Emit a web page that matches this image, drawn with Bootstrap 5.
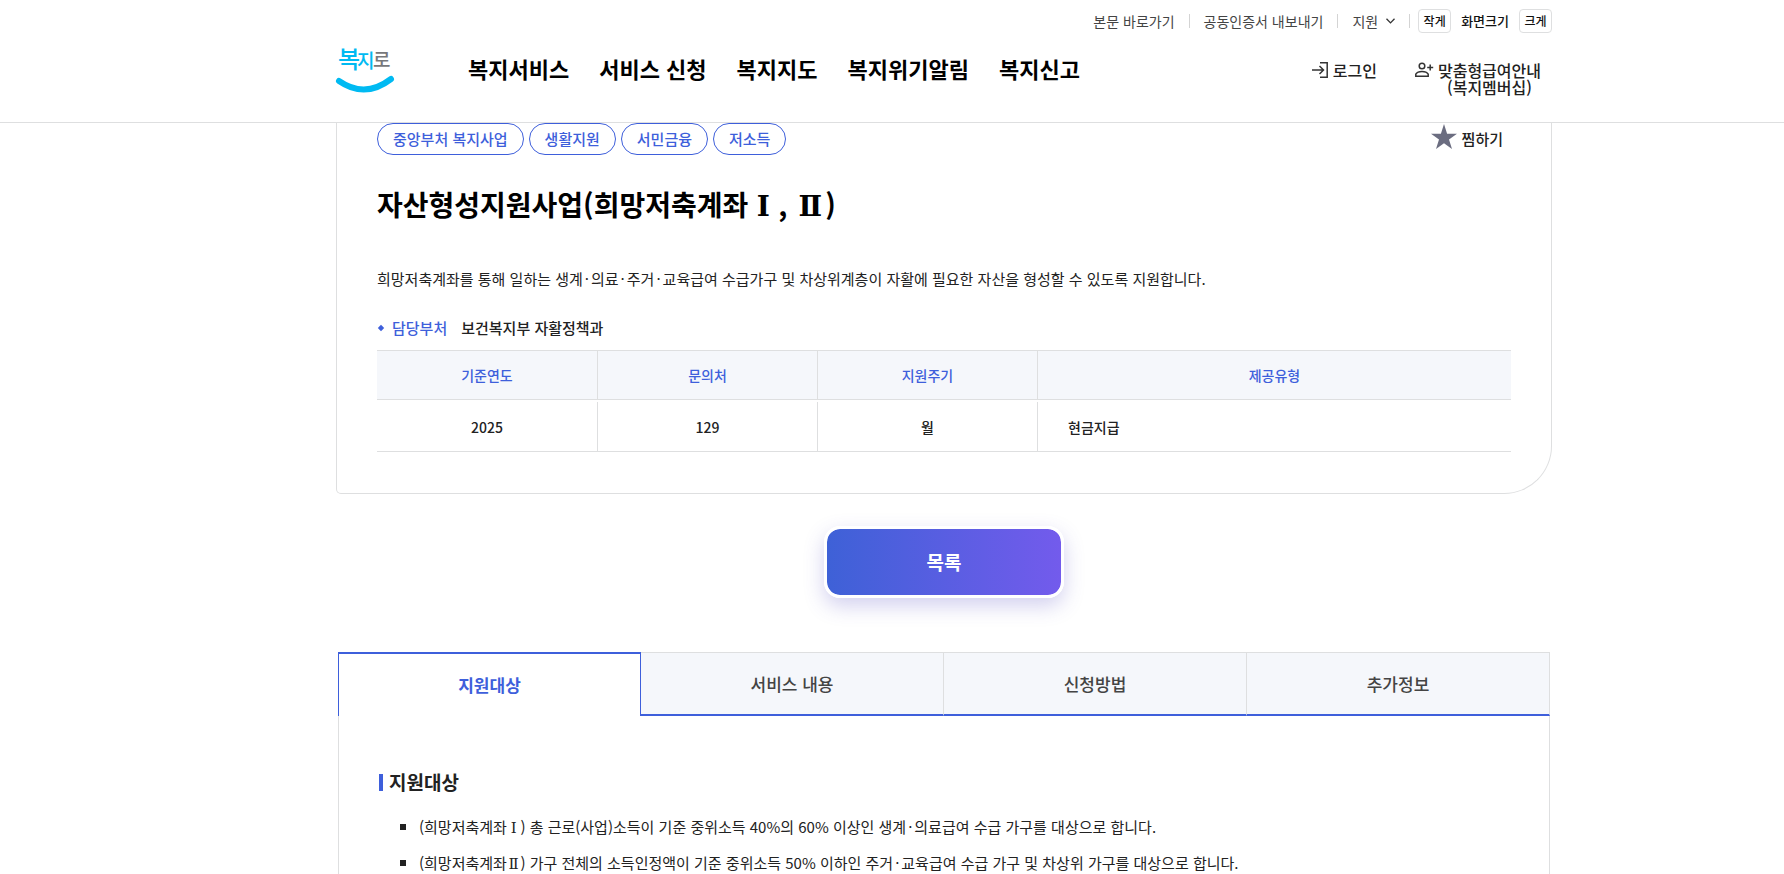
<!DOCTYPE html>
<html lang="ko">
<head>
<meta charset="utf-8">
<meta name="viewport" content="width=device-width, initial-scale=1">
<title>복지로 | 자산형성지원사업</title>
<link href="https://cdn.jsdelivr.net/npm/bootstrap@5.3.0/dist/css/bootstrap.min.css" rel="stylesheet">
<style>
:root{--brand:#3e5fdb;--line:#dedfe0;--soft:#f5f7fb}
body{font-family:"Noto Sans CJK KR","Noto Sans",sans-serif;font-weight:400;color:#222;background:#fff;overflow-x:hidden}
a{color:inherit;text-decoration:none}
.page-side{padding-left:104px}
.page-width{max-width:1216px;margin:0 auto}
.site-header{border-bottom:1px solid var(--line);z-index:10;padding-bottom:19px}
.util-row{height:33px;padding-top:9px;font-size:14px;line-height:24px;color:#444}
.util-sep{width:1px;height:14px;background:#d4d4d4;margin:0 14px}
.size-btn{width:33px;height:24px;border:1px solid var(--line);border-radius:4px;background:#fff;font-size:12px;line-height:20px;font-weight:500;color:#111}
.size-label{font-size:13px;font-weight:500;color:#111;margin:0 10px}
.main-row{height:70px}
.main-nav{margin-left:74px;gap:30px;font-size:22px;line-height:32px;font-weight:700;color:#000}
.user-links{font-size:16px;line-height:17px;font-weight:500;color:#222;gap:38px;padding-right:11px;padding-top:13px}
.util-toggle{font-size:14px;line-height:24px;color:#444}
.logo-art{overflow:visible}
.intro-box{border:1px solid var(--line);border-top:0;border-radius:0 0 48px 5px;padding:0 40px 39px}
.tag-row{gap:5px}
.tag-pill{height:32px;line-height:30px;padding:0 15px;border:1px solid var(--brand);border-radius:16px;color:var(--brand);font-size:15px;font-weight:500}
.wish-btn{font-size:15px;line-height:32px;font-weight:500;color:#222;padding-right:8px}
.svc-title{font-size:28px;line-height:40px;font-weight:700;color:#000;margin:29px 0 0}
.svc-desc{font-size:15px;line-height:24px;margin:43px 0 0}
.numeral{display:inline-block;width:.9em;line-height:1;text-align:center;font-family:"DejaVu Serif",serif}
.svc-title .numeral{width:30px}
.mid-dot{padding:0 2px}
.dept{font-size:15px;line-height:24px;font-weight:500;margin:25px 0 0}
.dept-name{color:var(--brand);margin:0 14px 0 7px}
.info-table{width:100%;margin:8px 0 0;border-collapse:separate;border-spacing:0 2px;table-layout:fixed;font-size:14px;line-height:20px;font-weight:500;text-align:center}
.info-table th{height:50px;background:var(--soft);color:var(--brand);font-weight:500;border:solid var(--line);border-width:1px 0}
.info-table td{height:50px;border-bottom:1px solid var(--line)}
.info-table th+th,.info-table td+td{border-left:1px solid var(--line)}
.info-table td:last-child{text-align:left;padding-left:30px}
.col-narrow{width:220px}
.list-btn{width:240px;height:72px;border:3px solid #fff;border-radius:16px;background:linear-gradient(90deg,#3e61d7,#735bec) padding-box;box-shadow:0 8px 20px rgba(80,70,190,.25);color:#fff;font-size:19px;line-height:28px;font-weight:700;margin:32px 0 54px}
.detail{margin:0 2px}
.tab-bar{height:64px}
.tab-item{border:0;border-top:1px solid var(--line);border-right:1px solid var(--line);border-bottom:2px solid var(--brand);background:var(--soft);color:#444;font-size:17px;line-height:26px;font-weight:500;padding:0}
.tab-item.active{background:#fff;color:var(--brand);border:1px solid var(--brand);border-top-width:2px;border-bottom:0;font-weight:700}
.tab-body{border:solid var(--line);border-width:0 1px;padding:52px 40px 80px}
.sub-title{font-size:19px;line-height:28px;font-weight:700;margin:0 0 13px;gap:6px}
.sub-title::before{content:"";width:4px;height:17px;background:var(--brand)}
.target-list{margin:0;padding-left:21px;list-style:none;font-size:15px;line-height:36px}
.target-list li{display:flex;align-items:center;gap:13px}
.target-list li::before{content:"";flex:none;width:6px;height:6px;background:#222}
</style>
</head>
<body>
<header class="site-header sticky-top bg-white page-side">
  <div class="page-width">
    <div class="util-row d-flex justify-content-end align-items-center">
      <a href="#main">본문 바로가기</a>
      <span class="util-sep" aria-hidden="true"></span>
      <a href="#">공동인증서 내보내기</a>
      <span class="util-sep" aria-hidden="true"></span>
      <button type="button" class="util-toggle border-0 bg-transparent p-0 d-flex align-items-center gap-2">지원
        <svg width="9" height="6" viewBox="0 0 9 6" fill="none" stroke="#333" stroke-width="1.3"><path d="M.5.7 4.5 4.9 8.5.7"/></svg>
      </button>
      <span class="util-sep me-2" aria-hidden="true"></span>
      <button type="button" class="size-btn p-0">작게</button>
      <span class="size-label">화면크기</span>
      <button type="button" class="size-btn p-0">크게</button>
    </div>
    <div class="main-row d-flex align-items-center">
      <a href="#" aria-label="복지로 홈">
        <svg width="58" height="50" viewBox="0 0 58 50" class="logo-art d-block" font-family="Noto Sans CJK KR, sans-serif" font-weight="500">
          <text x="2" y="25" font-size="24" fill="#00baf2">복</text>
          <text x="21" y="25" font-size="19" fill="#00baf2">지</text>
          <text x="37" y="24" font-size="19" fill="#77787b">로</text>
          <path d="M3 38Q29 56 55 36" fill="none" stroke="#00baf2" stroke-width="6" stroke-linecap="round"/>
        </svg>
      </a>
      <nav class="main-nav d-flex" aria-label="주 메뉴">
        <a href="#">복지서비스</a><a href="#">서비스 신청</a><a href="#">복지지도</a><a href="#">복지위기알림</a><a href="#">복지신고</a>
      </nav>
      <div class="user-links d-flex align-items-start ms-auto">
        <a href="#" class="d-flex gap-1 mt-2">
          <svg width="17" height="16" viewBox="0 0 17 16" fill="none" stroke="#333" stroke-width="1.5"><path d="M8 .8h7.200v14.400H8M0 8h11M7.500 4 11.500 8l-4 4"/></svg>
          로그인</a>
        <a href="#" class="d-flex mt-2">
          <svg class="me-1" width="19" height="16" viewBox="0 0 19 16" fill="none" stroke="#333" stroke-width="1.5"><circle cx="7" cy="4" r="2.8"/><path d="M.8 14.200v-2C2.200 10 4.500 9.600 7 9.600s4.800.4 6.200 2.600v2zM15.200 2.500v6M12.200 5.500h6"/></svg>
          <span class="text-center">맞춤형급여안내<br>(복지멤버십)</span></a>
      </div>
    </div>
  </div>
</header>
<main id="main" class="page-side">
  <div class="page-width">
    <section class="intro-box">
      <div class="d-flex justify-content-between">
        <div class="tag-row d-flex">
          <span class="tag-pill">중앙부처 복지사업</span><span class="tag-pill">생활지원</span><span class="tag-pill">서민금융</span><span class="tag-pill">저소득</span>
        </div>
        <button type="button" class="wish-btn border-0 bg-transparent py-0 ps-0 d-flex gap-1">
          <svg width="27" height="28" viewBox="0 0 27 28" fill="#6b6d80"><path d="M13 1 16.100 10.700H26L18 16.500 21 26 13 20.200 5 26 8 16.500 0 10.700H9.900z"/></svg>찜하기</button>
      </div>
      <h1 class="svc-title">자산형성지원사업(희망저축계좌<span class="numeral">Ⅰ</span>, <span class="numeral">Ⅱ</span>)</h1>
      <p class="svc-desc">희망저축계좌를 통해 일하는 생계<span class="mid-dot">·</span>의료<span class="mid-dot">·</span>주거<span class="mid-dot">·</span>교육급여 수급가구 및 차상위계층이 자활에 필요한 자산을 형성할 수 있도록 지원합니다.</p>
      <p class="dept d-flex align-items-center">
        <svg width="8" height="8" viewBox="0 0 8 8" fill="#3e5fdb"><path d="M4 .8 7.200 4 4 7.200.8 4z"/></svg>
        <span class="dept-name">담당부처</span><span>보건복지부 자활정책과</span></p>
      <table class="info-table">
        <colgroup><col class="col-narrow"><col class="col-narrow"><col class="col-narrow"><col></colgroup>
        <thead><tr><th scope="col">기준연도</th><th scope="col">문의처</th><th scope="col">지원주기</th><th scope="col">제공유형</th></tr></thead>
        <tbody><tr><td>2025</td><td>129</td><td>월</td><td>현금지급</td></tr></tbody>
      </table>
    </section>
    <div class="text-center"><button type="button" class="list-btn">목록</button></div>
    <section class="detail">
      <div class="tab-bar d-flex" role="tablist">
        <button type="button" role="tab" aria-selected="true" class="tab-item active w-25">지원대상</button>
        <button type="button" role="tab" aria-selected="false" class="tab-item w-25">서비스 내용</button>
        <button type="button" role="tab" aria-selected="false" class="tab-item w-25">신청방법</button>
        <button type="button" role="tab" aria-selected="false" class="tab-item w-25">추가정보</button>
      </div>
      <div class="tab-body" role="tabpanel">
        <h2 class="sub-title d-flex align-items-center">지원대상</h2>
        <ul class="target-list">
          <li><span>(희망저축계좌<span class="numeral">Ⅰ</span>) 총 근로(사업)소득이 기준 중위소득 40%의 60% 이상인 생계<span class="mid-dot">·</span>의료급여 수급 가구를 대상으로 합니다.</span></li>
          <li><span>(희망저축계좌<span class="numeral">Ⅱ</span>) 가구 전체의 소득인정액이 기준 중위소득 50% 이하인 주거<span class="mid-dot">·</span>교육급여 수급 가구 및 차상위 가구를 대상으로 합니다.</span></li>
        </ul>
      </div>
    </section>
  </div>
</main>
<script src="https://cdn.jsdelivr.net/npm/bootstrap@5.3.0/dist/js/bootstrap.bundle.min.js"></script>
</body>
</html>
